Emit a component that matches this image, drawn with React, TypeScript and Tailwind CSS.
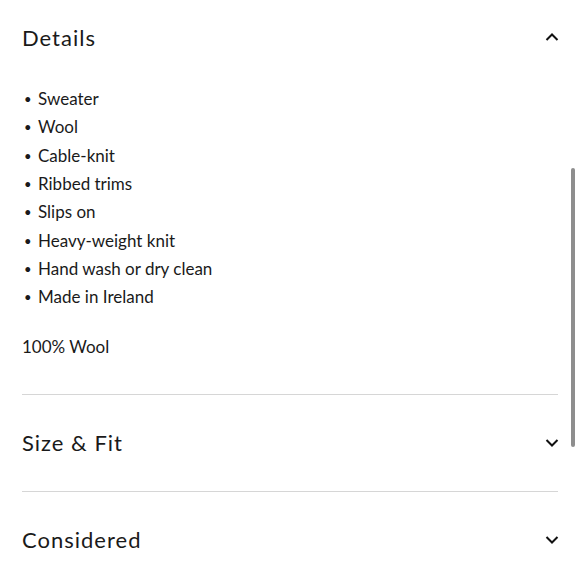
import React from 'react';

const details = [
  'Sweater',
  'Wool',
  'Cable-knit',
  'Ribbed trims',
  'Slips on',
  'Heavy-weight knit',
  'Hand wash or dry clean',
  'Made in Ireland',
];

function Chevron({ up }: { up?: boolean }) {
  return (
    <svg width="14" height="8" viewBox="0 0 14 8" fill="none" className="-mr-[1px]">
      <path
        d={up ? 'M1.5 7L7 1.5L12.5 7' : 'M1.5 1L7 6.5L12.5 1'}
        stroke="#111"
        strokeWidth="2"
      />
    </svg>
  );
}

function SectionHeader({ title, open }: { title: string; open?: boolean }) {
  return (
    <div className="flex items-center justify-between h-[74px]">
      <h2 className="text-[22px] tracking-[1px] text-[#1a1a1a]">{title}</h2>
      <Chevron up={open} />
    </div>
  );
}

export default function App() {
  return (
    <div className="relative w-[580px] h-[580px] overflow-hidden bg-white font-['Lato',sans-serif]">
      <div className="pl-[22px] pr-[22px]">
        {/* Details (expanded) */}
        <SectionHeader title="Details" open />
        <ul className="mt-[11px] text-[17px] leading-[28.35px] text-[#1a1a1a]">
          {details.map((item) => (
            <li key={item} className="flex items-center">
              <span className="w-[16px] pl-[2px] text-[13px]">•</span>
              <span>{item}</span>
            </li>
          ))}
        </ul>
        <p className="mt-[21px] mb-[33px] text-[17px] leading-[28px] text-[#1a1a1a]">100% Wool</p>

        <div className="border-t border-[#d6d6d6]">
          <div className="h-[96px] flex items-center justify-between">
            <h2 className="text-[22px] tracking-[1px] text-[#1a1a1a]">Size &amp; Fit</h2>
            <Chevron />
          </div>
        </div>
        <div className="border-t border-[#d6d6d6]">
          <div className="h-[96px] flex items-center justify-between">
            <h2 className="text-[22px] tracking-[1px] text-[#1a1a1a]">Considered</h2>
            <Chevron />
          </div>
        </div>
      </div>

      {/* overlay scrollbar */}
      <div className="absolute left-[571px] top-[168px] w-[4px] h-[279px] rounded-full bg-[#8e8e8e]" />
    </div>
  );
}
